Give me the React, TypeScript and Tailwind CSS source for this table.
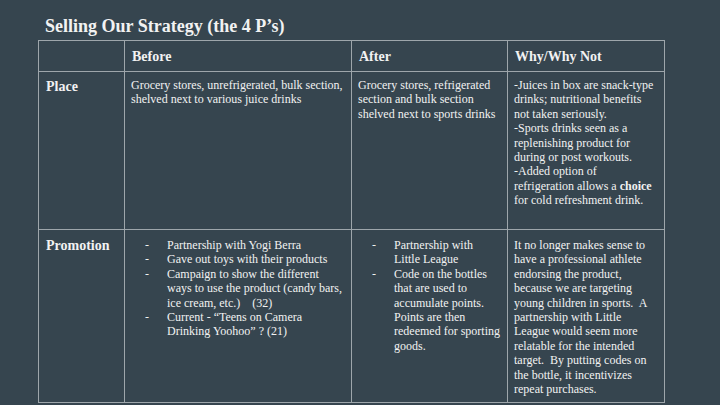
const serif = { fontFamily: '"Liberation Serif", "Times New Roman", serif' };

const Dashed = ({ items }: { items: string[] }) => (
  <ul className="mt-[3px]">
    {items.map((t, i) => (
      <li key={i} className="flex">
        <span className="w-[23px] shrink-0 pl-[1px]">-</span>
        <span className="whitespace-pre-wrap">{t}</span>
      </li>
    ))}
  </ul>
);

export default function App() {
  return (
    <div
      className="w-[720px] h-[405px] bg-[#36454f] text-[#f2f2f2] overflow-hidden relative"
      style={serif}
    >
      <h1 className="absolute left-[45px] top-[14px] text-[18px] font-bold leading-[24px]">
        Selling Our Strategy (the 4 P’s)
      </h1>
      <table className="absolute left-[38px] top-[40px] border-collapse table-fixed w-[626px] text-[12px] leading-[14.4px]">
        <colgroup>
          <col className="w-[86px]" />
          <col className="w-[227px]" />
          <col className="w-[156px]" />
          <col className="w-[157px]" />
        </colgroup>
        <tbody>
          <tr className="h-[31px]">
            <td className="border border-[#9ea6ab]"></td>
            <td className="border border-[#9ea6ab] px-[7px] pt-[2px] text-[14px] font-bold">Before</td>
            <td className="border border-[#9ea6ab] px-[7px] pt-[2px] text-[14px] font-bold">After</td>
            <td className="border border-[#9ea6ab] px-[7px] pt-[2px] text-[14px] font-bold">Why/Why Not</td>
          </tr>
          <tr className="h-[158px] align-top">
            <td className="border border-[#9ea6ab] px-[7px] pt-[8px] text-[14px] font-bold">Place</td>
            <td className="border border-[#9ea6ab] px-[6px] pt-[6px]">
              Grocery stores, unrefrigerated, bulk section, shelved next to various juice drinks
            </td>
            <td className="border border-[#9ea6ab] px-[6px] pt-[6px]">
              Grocery stores, refrigerated section and bulk section shelved next to sports drinks
            </td>
            <td className="border border-[#9ea6ab] px-[6px] pt-[6px]">
              <p>-Juices in box are snack-type drinks; nutritional benefits not taken seriously.</p>
              <p>-Sports drinks seen as a replenishing product for during or post workouts.</p>
              <p>
                -Added option of refrigeration allows a <b>choice</b> for cold refreshment drink.
              </p>
            </td>
          </tr>
          <tr className="h-[173px] align-top">
            <td className="border border-[#9ea6ab] px-[7px] pt-[9px] text-[14px] font-bold">Promotion</td>
            <td className="border border-[#9ea6ab] pl-[19px] pr-[6px] pt-[5px]">
              <Dashed
                items={[
                  "Partnership with Yogi Berra",
                  "Gave out toys with their products",
                  "Campaign to show the different ways to use the product (candy bars, ice cream, etc.)    (32)",
                  "Current - “Teens on Camera Drinking Yoohoo” ? (21)",
                ]}
              />
            </td>
            <td className="border border-[#9ea6ab] pl-[19px] pr-[6px] pt-[5px]">
              <Dashed
                items={[
                  "Partnership with Little League",
                  "Code on the bottles that are used to accumulate points. Points are then redeemed for sporting goods.",
                ]}
              />
            </td>
            <td className="border border-[#9ea6ab] px-[6px] pt-[8px] whitespace-pre-wrap">
              {"It no longer makes sense to have a professional athlete endorsing the product, because we are targeting young children in sports.  A partnership with Little League would seem more relatable for the intended target.  By putting codes on the bottle, it incentivizes repeat purchases."}
            </td>
          </tr>
        </tbody>
      </table>
    </div>
  );
}
